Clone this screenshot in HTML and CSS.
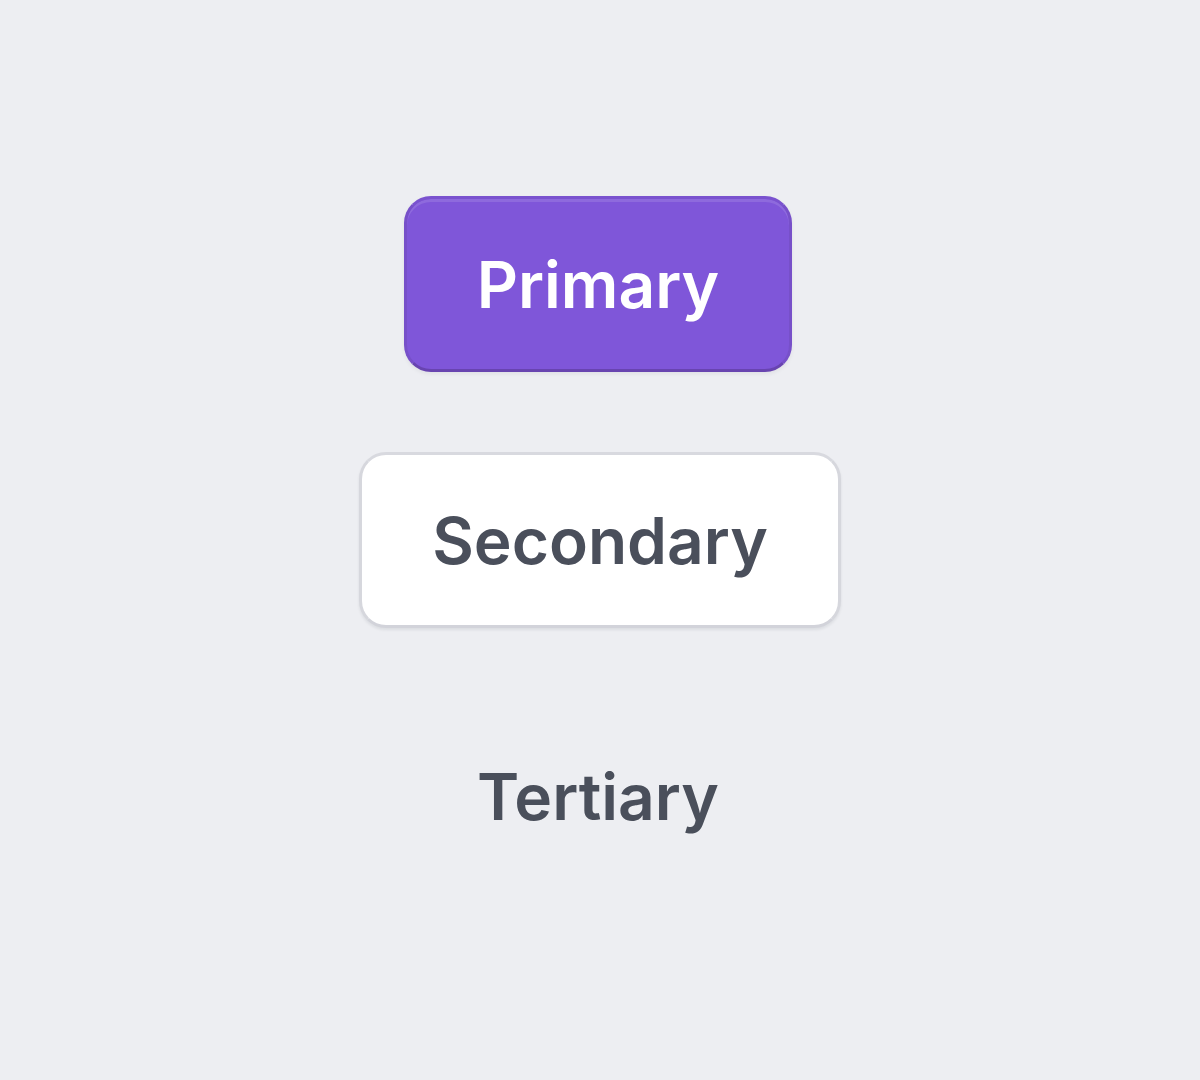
FILE: index.html
```html
<!DOCTYPE html>
<html lang="en">
<head>
<meta charset="utf-8">
<title>Buttons</title>
<link rel="stylesheet" href="styles.css">
</head>
<body>
<main class="stack">
  <button class="btn btn-primary" type="button">Primary</button>
  <button class="btn btn-secondary" type="button">Secondary</button>
  <button class="btn btn-tertiary" type="button">Tertiary</button>
</main>
</body>
</html>
```
FILE: styles.css
```css
html, body {
  margin: 0;
  padding: 0;
  background: #edeef2;
  width: 1200px;
  height: 1080px;
}
body {
  font-family: Inter, "Noto Sans", sans-serif;
}
.stack {
  display: flex;
  flex-direction: column;
  align-items: center;
  gap: 80px;
  padding-top: 196px;
}
.btn {
  box-sizing: border-box;
  height: 176px;
  padding: 2px 70px 0;
  border: 3px solid transparent;
  border-radius: 27px;
  font-family: Inter, "Noto Sans", sans-serif;
  font-size: 64px;
  font-weight: 600;
  line-height: 96px;
  letter-spacing: 0;
  display: inline-flex;
  align-items: center;
  justify-content: center;
  cursor: pointer;
}
.btn-primary {
  margin-right: 4px;
  background: #7f56d9;
  color: #ffffff;
  border-color: #7a52cf #7750c9 #6844b0 #7750c9;
  box-shadow: inset 0 3px 0 rgba(255, 255, 255, 0.12), 0 2px 4px rgba(16, 24, 40, 0.06);
}
.btn-secondary {
  background: #ffffff;
  color: #4a4f5b;
  border-color: #d8d9df #d6d7dd #d2d3da #d6d7dd;
  box-shadow: 0 2px 3px rgba(16, 24, 40, 0.08);
}
.btn-tertiary {
  margin-right: 4px;
  background: transparent;
  color: #4a4f5b;
}
```
